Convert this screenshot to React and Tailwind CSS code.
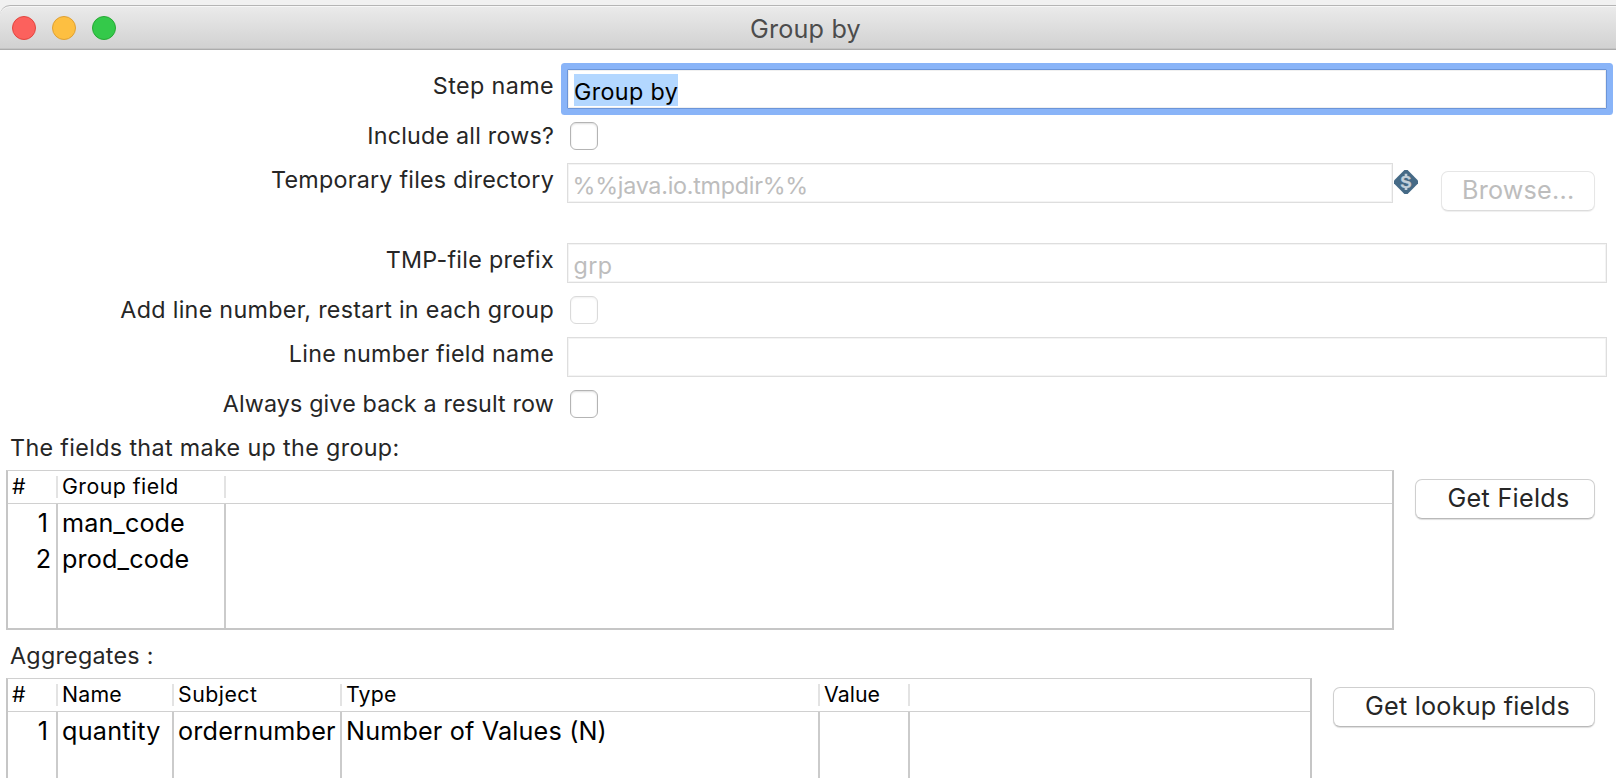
const LABEL = "text-[23.3px] leading-[34px] text-[#262626] whitespace-pre";

function Label({ text, tracking }) {
  return (
    <div className={`flex w-[554px] shrink-0 justify-end ${LABEL} ${tracking}`}>
      {text}
    </div>
  );
}

function Row({ height, label, tracking, children }) {
  return (
    <div className={`flex items-start ${height}`}>
      <Label text={label} tracking={tracking} />
      {children}
    </div>
  );
}

function Field({ width = "w-[1040px]", inset = "pl-[5.5px]", tracking = "", value }) {
  return (
    <div
      className={`ml-[13px] h-10 shrink-0 border border-[#dedede] bg-white pt-[5px] text-[23.3px] leading-[34px] text-[#bdbdbd] shadow-[inset_0_0_0_1px_#f4f4f4] whitespace-pre ${inset} ${width} ${tracking}`}
    >
      {value}
    </div>
  );
}

function Checkbox({ disabled }) {
  return (
    <div
      className={`ml-4 mt-[3px] size-7 shrink-0 rounded-[6px] border bg-white ${
        disabled
          ? "border-[#dadada] shadow-[inset_0_1px_2px_#f0f0f0]"
          : "border-[#b4b4b4] shadow-[inset_0_1px_2px_#dedede]"
      }`}
    />
  );
}

function Button({ className, disabled, text }) {
  return (
    <div
      className={`h-10 shrink-0 rounded-[7px] border bg-white text-[25.2px] leading-[36px] whitespace-pre ${
        disabled
          ? "border-[#e6e6e6] border-b-[#dcdcdc] text-[#bdbdbd] shadow-[0_1px_1px_#efefef]"
          : "border-[#cfcfcf] border-b-[#b9b9b9] text-[#262626] shadow-[0_1px_1px_#dedede]"
      } ${className}`}
    >
      {text}
    </div>
  );
}

function VariableIcon() {
  return (
    <svg className="ml-px mt-[7px] size-6 shrink-0" viewBox="0 0 24 24">
      <path d="M10.4 0h3.2L24 10.4v3.2L13.6 24h-3.2L0 13.6v-3.2z" fill="#456a86" />
      <text
        x="12"
        y="18"
        textAnchor="middle"
        fontFamily="Liberation Sans, sans-serif"
        fontWeight="700"
        fontSize="17"
        fill="#c2d0da"
        stroke="#c2d0da"
        strokeWidth="0.3"
      >
        S
      </text>
      <path d="M12 3.8v2.6M12 17.2v2.8" stroke="#c2d0da" strokeWidth="2.6" />
    </svg>
  );
}

function Table({ className, columns, rows }) {
  return (
    <div
      className={`flex shrink-0 flex-col border-x-2 border-t border-[#c6c6c6] border-t-[#d0d0d0] bg-white text-black ${className}`}
    >
      <div className="flex h-[33px] shrink-0 items-start border-b border-[#d0d0d0]">
        {columns.map((c) => (
          <div
            key={c.title}
            className={`mt-[5px] h-[22px] shrink-0 border-r-2 border-[#e3e3e3] pl-[4px] text-[21.3px] leading-[20px] whitespace-pre ${c.width} ${c.tracking}`}
          >
            {c.title}
          </div>
        ))}
      </div>
      <div className="flex grow">
        {columns.map((c, i) => (
          <div
            key={c.title}
            className={`flex shrink-0 flex-col border-r-2 border-[#cbcbcb] pt-px ${c.width} ${
              i === 0 ? "items-end pr-[5px]" : "pl-[4px]"
            }`}
          >
            {rows.map((r, j) => (
              <div
                key={j}
                className={`h-9 text-[25.2px] leading-[36px] whitespace-pre ${r[i].tracking}`}
              >
                {r[i].text}
              </div>
            ))}
          </div>
        ))}
      </div>
    </div>
  );
}

const groupColumns = [
  { title: "#", width: "w-[50px]", tracking: "" },
  { title: "Group field", width: "w-[168px]", tracking: "tracking-[0.47px]" },
];

const groupRows = [
  [{ text: "1", tracking: "pr-[3px]" }, { text: "man_code", tracking: "tracking-[0.09px]" }],
  [{ text: "2", tracking: "" }, { text: "prod_code", tracking: "tracking-[0.15px]" }],
];

const aggregateColumns = [
  { title: "#", width: "w-[50px]", tracking: "" },
  { title: "Name", width: "w-[116px]", tracking: "tracking-[0.21px]" },
  { title: "Subject", width: "w-[168px]", tracking: "tracking-[0.5px]" },
  { title: "Type", width: "w-[478px]", tracking: "tracking-[0.19px]" },
  { title: "Value", width: "w-[90px]", tracking: "tracking-[0.05px]" },
];

const aggregateRows = [
  [
    { text: "1", tracking: "pr-[3px]" },
    { text: "quantity", tracking: "tracking-[0.25px]" },
    { text: "ordernumber", tracking: "tracking-[0.2px]" },
    { text: "Number of Values (N)", tracking: "tracking-[0.16px]" },
    { text: "", tracking: "" },
  ],
];

export default function App() {
  return (
    <div className="flex h-[778px] w-[1616px] flex-col overflow-hidden bg-[#f1f1f1] font-['Inter',sans-serif]">
      <header className="mt-[5px] grid h-[45px] shrink-0 grid-cols-[1fr_auto_1fr] items-start rounded-tl-[10px] border-y border-t-[#b5b5b5] border-b-[#acacac] bg-linear-to-b from-[#ebebeb] to-[#d1d1d1] shadow-[inset_0_1px_0_#f7f7f7,inset_0_-1px_0_#c4c4c4]">
        <div className="flex gap-4 pl-3 pt-[10px]">
          <div className="size-6 rounded-full border border-[#e2463f] bg-[#fc615d]" />
          <div className="size-6 rounded-full border border-[#dfa033] bg-[#fdbf41]" />
          <div className="size-6 rounded-full border border-[#27a934] bg-[#34c94a]" />
        </div>
        <div className="pr-[5px] pt-[5px] text-[25.2px] leading-[36px] tracking-[0.18px] text-[#4c4c4c]">
          Group by
        </div>
      </header>

      <main className="flex grow flex-col bg-white pt-[19px]">
        <Row height="h-[50px]" label="Step name" tracking="tracking-[0.4px]">
          <div className="ml-[13px] h-10 w-[1040px] shrink-0 rounded-[1px] border border-[#6c95d8] bg-white pl-[6px] pt-[4px] shadow-[0_0_0_6px_#89b4f8,inset_0_0_0_1px_#f0f0f0]">
            <div className="h-8 w-[104px] bg-[#b3d7ff] text-[23.3px] leading-[35px] tracking-[0.37px] text-black whitespace-pre">
              Group by
            </div>
          </div>
        </Row>
        <Row height="h-[44px]" label="Include all rows?" tracking="tracking-[0.2px]">
          <Checkbox />
        </Row>
        <Row height="h-[80px]" label="Temporary files directory" tracking="tracking-[0.23px]">
          <Field
            width="w-[826px]"
            inset="pl-[4.5px]"
            tracking="tracking-[-0.25px]"
            value="%%java.io.tmpdir%%"
          />
          <VariableIcon />
          <Button
            className="ml-[23px] mt-2 w-[154px] pl-[20px] tracking-[0.2px]"
            disabled
            text="Browse..."
          />
        </Row>
        <Row height="h-[50px]" label="TMP-file prefix" tracking="tracking-[0.3px]">
          <Field tracking="tracking-[0.4px]" value="grp" />
        </Row>
        <Row
          height="h-[44px]"
          label="Add line number, restart in each group"
          tracking="tracking-[0.3px]"
        >
          <Checkbox disabled />
        </Row>
        <Row height="h-[50px]" label="Line number field name" tracking="tracking-[0.28px]">
          <Field value="" />
        </Row>
        <Row height="h-[44px]" label="Always give back a result row" tracking="tracking-[0.14px]">
          <Checkbox />
        </Row>

        <div className={`h-[39px] pl-[10px] tracking-[0.35px] ${LABEL}`}>
          The fields that make up the group:
        </div>
        <div className="flex items-start pl-[6px]">
          <Table
            className="h-[160px] w-[1388px] border-b-2"
            columns={groupColumns}
            rows={groupRows}
          />
          <Button
            className="ml-[21px] mt-[9px] w-[180px] pl-[31.5px] tracking-[0.28px]"
            text="Get Fields"
          />
        </div>

        <div className={`mt-[9px] h-[39px] pl-[10px] tracking-[0.26px] ${LABEL}`}>
          Aggregates :
        </div>
        <div className="flex grow items-start pl-[6px]">
          <Table
            className="w-[1306px] self-stretch"
            columns={aggregateColumns}
            rows={aggregateRows}
          />
          <Button
            className="ml-[21px] mt-[9px] w-[262px] pl-[31px] tracking-[0.22px]"
            text="Get lookup fields"
          />
        </div>
      </main>
    </div>
  );
}
